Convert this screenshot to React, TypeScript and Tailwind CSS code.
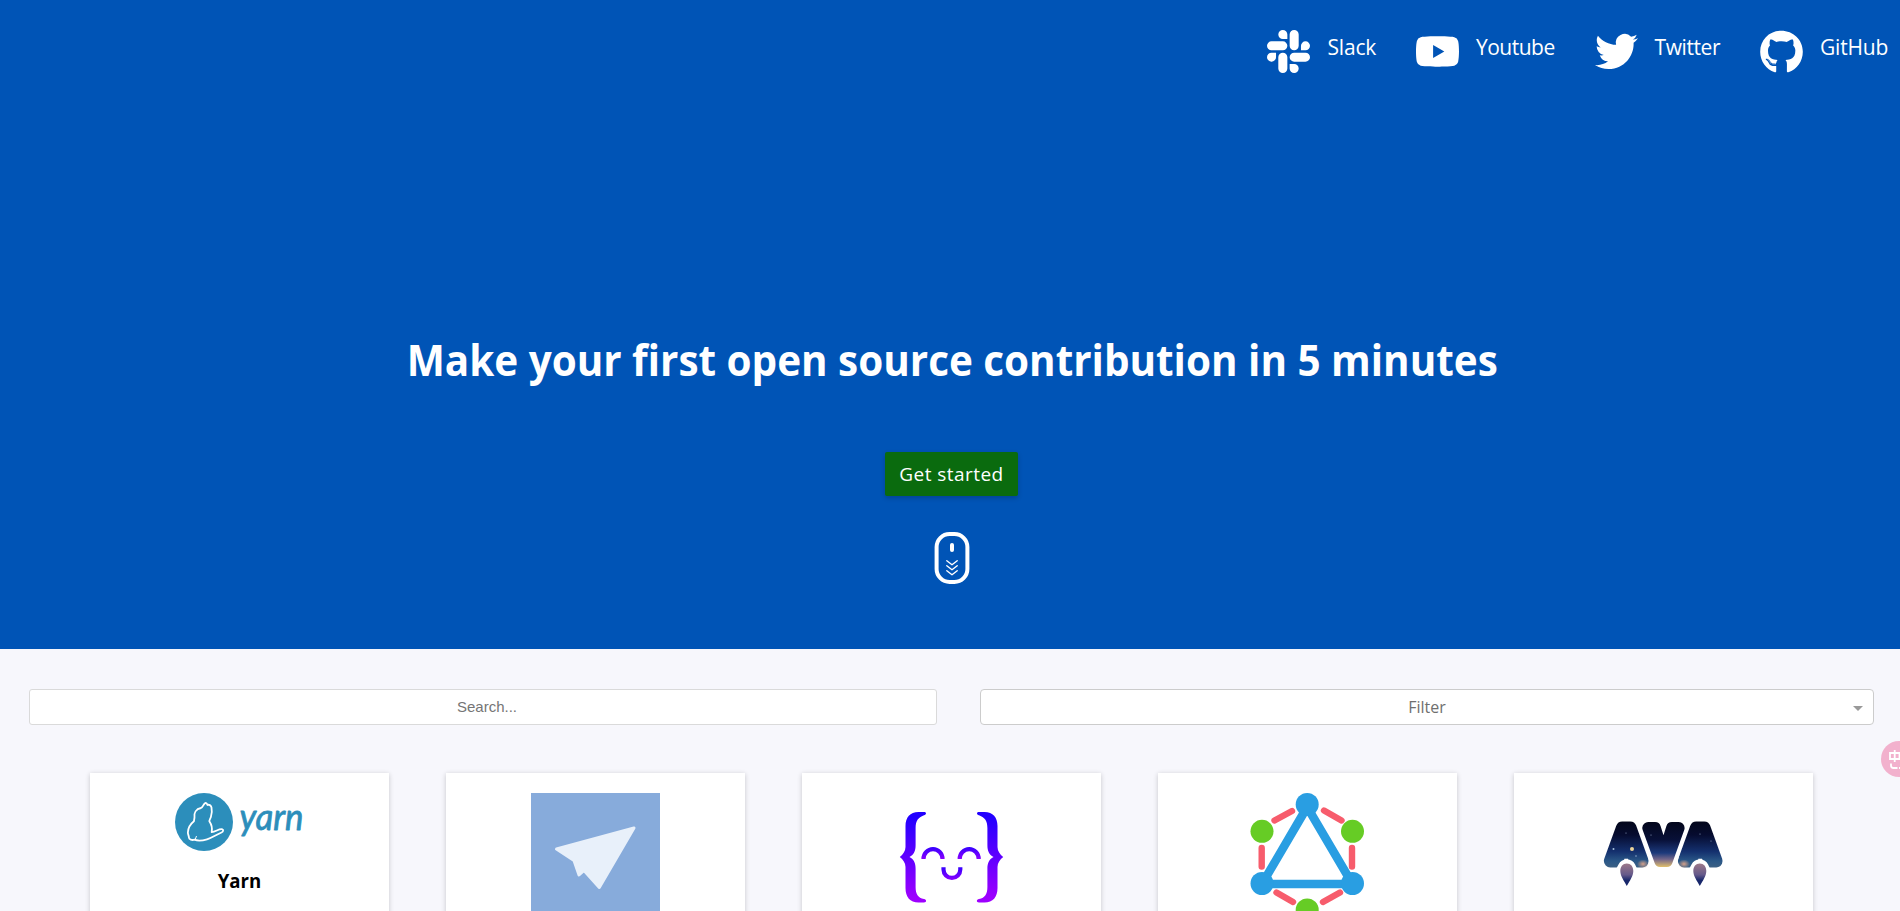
import React from "react";
import { FaGithub } from "react-icons/fa";

const SlackIcon = () => (
  <svg viewBox="0 0 24 24" className="h-[43px] w-[43px] fill-white">
    <path d="M5.042 15.165a2.528 2.528 0 0 1-2.52 2.523A2.528 2.528 0 0 1 0 15.165a2.527 2.527 0 0 1 2.522-2.52h2.52v2.52zM6.313 15.165a2.527 2.527 0 0 1 2.521-2.52 2.527 2.527 0 0 1 2.521 2.52v6.313A2.528 2.528 0 0 1 8.834 24a2.528 2.528 0 0 1-2.521-2.522v-6.313zM8.834 5.042a2.528 2.528 0 0 1-2.521-2.52A2.528 2.528 0 0 1 8.834 0a2.528 2.528 0 0 1 2.521 2.522v2.52H8.834zM8.834 6.313a2.528 2.528 0 0 1 2.521 2.521 2.528 2.528 0 0 1-2.521 2.521H2.522A2.528 2.528 0 0 1 0 8.834a2.528 2.528 0 0 1 2.522-2.521h6.312zM18.956 8.834a2.528 2.528 0 0 1 2.522-2.521A2.528 2.528 0 0 1 24 8.834a2.528 2.528 0 0 1-2.522 2.521h-2.522V8.834zM17.688 8.834a2.528 2.528 0 0 1-2.523 2.521 2.527 2.527 0 0 1-2.52-2.521V2.522A2.527 2.527 0 0 1 15.165 0a2.528 2.528 0 0 1 2.523 2.522v6.312zM15.165 18.956a2.528 2.528 0 0 1 2.523 2.522A2.528 2.528 0 0 1 15.165 24a2.527 2.527 0 0 1-2.52-2.522v-2.522h2.52zM15.165 17.688a2.527 2.527 0 0 1-2.52-2.523 2.526 2.526 0 0 1 2.52-2.52h6.313A2.527 2.527 0 0 1 24 15.165a2.528 2.528 0 0 1-2.522 2.523h-6.313z" />
  </svg>
);

const YoutubeIcon = () => (
  <svg viewBox="0 0 24 24" className="h-[43px] w-[43px] fill-white">
    <path d="M23.498 6.186a3.016 3.016 0 0 0-2.122-2.136C19.505 3.545 12 3.545 12 3.545s-7.505 0-9.377.505A3.017 3.017 0 0 0 .502 6.186C0 8.07 0 12 0 12s0 3.93.502 5.814a3.016 3.016 0 0 0 2.122 2.136c1.871.505 9.376.505 9.376.505s7.505 0 9.377-.505a3.015 3.015 0 0 0 2.122-2.136C24 15.93 24 12 24 12s0-3.93-.502-5.814zM9.545 15.568V8.432L15.818 12l-6.273 3.568z" />
  </svg>
);

const TwitterIcon = () => (
  <svg viewBox="0 0 24 24" className="h-[43px] w-[43px] fill-white">
    <path d="M23.953 4.57a10 10 0 01-2.825.775 4.958 4.958 0 002.163-2.723c-.951.555-2.005.959-3.127 1.184a4.92 4.92 0 00-8.384 4.482C7.69 8.095 4.067 6.13 1.64 3.162a4.822 4.822 0 00-.666 2.475c0 1.71.87 3.213 2.188 4.096a4.904 4.904 0 01-2.228-.616v.06a4.923 4.923 0 003.946 4.827 4.996 4.996 0 01-2.212.085 4.936 4.936 0 004.604 3.417 9.867 9.867 0 01-6.102 2.105c-.39 0-.779-.023-1.17-.067a13.995 13.995 0 007.557 2.209c9.053 0 13.998-7.496 13.998-13.985 0-.21 0-.42-.015-.63A9.935 9.935 0 0024 4.59z" />
  </svg>
);

const MouseIcon = () => (
  <svg viewBox="0 0 36 52" className="h-[52px] w-9" fill="none" stroke="white" strokeLinecap="round" strokeLinejoin="round">
    <rect x="2.6" y="2" width="30.8" height="48" rx="13" strokeWidth="4" />
    <path d="M18 13v5" strokeWidth="4" />
    <path d="M12.8 28.7l5.2 4 5.2-4M12.8 33.7l5.2 4 5.2-4M12.8 38.7l5.2 4 5.2-4" strokeWidth="1.4" />
  </svg>
);

const YarnLogo = () => (
  <svg viewBox="0 0 129 58" className="h-[58px] w-[129px] overflow-visible">
    <circle cx="29" cy="29" r="29" fill="#2c8ebb" />
    <path
      d="M19.5 24.5c-.8-4.500 1.500-8.500 6.500-9.500 1.800-.5 2.200-3.500 4-4.800.8-.6 2 .2 2.500 1.800 1.500-.8 3.500.3 4 2.500.7 3.500.4 6.500-.6 9.500-.7 2-2 3.500-1.400 4.600 2 3 3 6.500 2.200 10.500 4-.2 6.800-3.400 10.200-3 2 .4 1.400 2.700-.4 3.400-5 2-9.300 5.300-14.500 6.800-3.500 1-9.500 1.600-12.500.4-2.500.8-5.500-.2-5.600-2.200.1-1.800-1.200-3.200-1-5.200.3-5.800 3-8.600 6-11z"
      fill="none" stroke="white" strokeWidth="1.800" strokeLinejoin="round"
    />
    <path d="M20 47l1.500-4" stroke="white" strokeWidth="1" />
    <text x="64.500" y="36.500" textLength="64" lengthAdjust="spacingAndGlyphs" fill="#2c8ebb" stroke="#2c8ebb" strokeWidth="0.800" strokeLinejoin="round" fontSize="36" fontStyle="italic" fontFamily="Lato, sans-serif">yarn</text>
  </svg>
);

const PlaneLogo = () => (
  <svg viewBox="0 0 129 129" className="h-[129px] w-[129px]">
    <rect width="129" height="129" fill="#87abdb" />
    <path d="M25.500 56L103 35L68.300 94.500L53 77.500L48 82L43 67.500Z" fill="#e8f0fa" stroke="#e8f0fa" strokeWidth="3" strokeLinejoin="round" />
  </svg>
);

const SmileLogo = () => (
  <svg viewBox="0 0 129 129" className="h-[129px] w-[129px]">
    <defs>
      <linearGradient id="brace" gradientUnits="userSpaceOnUse" x1="0" y1="19" x2="0" y2="109">
        <stop offset="0.05" stopColor="#2200ff" />
        <stop offset="0.95" stopColor="#9d00ff" />
      </linearGradient>
      <linearGradient id="eyes" gradientUnits="userSpaceOnUse" x1="0" y1="54" x2="0" y2="66">
        <stop offset="0" stopColor="#3300ff" />
        <stop offset="1" stopColor="#8a00ff" />
      </linearGradient>
      <linearGradient id="mouth" gradientUnits="userSpaceOnUse" x1="0" y1="74" x2="0" y2="87">
        <stop offset="0" stopColor="#3300ff" />
        <stop offset="1" stopColor="#8a00ff" />
      </linearGradient>
    </defs>
    <g fill="url(#brace)">
      <path d="M37 19H31.500C23 19 18.500 24.500 18.500 33V54C18.500 58 16 61.500 12.800 64C16 66.500 18.500 70 18.500 74V95C18.500 104 23 109.500 31.500 109.500H37C39.800 109.500 39.800 106.500 37 106C31 105 28.600 101 28.600 94V76C28.600 70 27 66.500 22.500 64C27 61.500 28.600 58 28.600 52V35C28.600 28 31 24.500 37 22.300C39.700 21.400 39.700 19 37 19Z" />
      <path transform="translate(129 0) scale(-1 1)" d="M37 19H31.500C23 19 18.500 24.500 18.500 33V54C18.500 58 16 61.500 12.800 64C16 66.500 18.500 70 18.500 74V95C18.500 104 23 109.500 31.500 109.500H37C39.800 109.500 39.800 106.500 37 106C31 105 28.600 101 28.600 94V76C28.600 70 27 66.500 22.500 64C27 61.500 28.600 58 28.600 52V35C28.600 28 31 24.500 37 22.300C39.700 21.400 39.700 19 37 19Z" />
    </g>
    <path d="M36.500 66A9.500 9.800 0 0 1 55.500 66M72.700 66A9.500 9.800 0 0 1 91.700 66" fill="none" stroke="url(#eyes)" strokeWidth="4.200" />
    <path d="M56.500 74.300V76.500A8.400 8.400 0 0 0 73.300 76.500V74.300" fill="none" stroke="url(#mouth)" strokeWidth="4.200" />
  </svg>
);

const GraphLogo = () => (
  <svg viewBox="0 0 129 129" className="h-[129px] w-[129px]">
    <g stroke="#f75c6c" strokeWidth="6.400" strokeLinecap="round">
      <path d="M31.500 27.500L49 18M81 17.500L98.500 27.500M18.700 55V73.500M109 55V73.500M33.500 99.500L50 109M80 109L97 99.500" />
    </g>
    <path d="M64.200 14L19 91H109.500Z" fill="none" stroke="#299ee2" strokeWidth="8.600" />
    <g fill="#299ee2">
      <circle cx="64.200" cy="11.500" r="11.500" />
      <circle cx="19" cy="90.500" r="11.500" />
      <circle cx="109.500" cy="90.500" r="11.500" />
    </g>
    <g fill="#66cc25">
      <circle cx="19" cy="38.300" r="11.500" />
      <circle cx="109.500" cy="38.300" r="11.500" />
      <circle cx="64.200" cy="117" r="11.500" />
    </g>
  </svg>
);

const AvaLogo = () => (
  <svg viewBox="0 0 129 129" className="h-[129px] w-[129px]">
    <defs>
      <linearGradient id="night" gradientUnits="userSpaceOnUse" x1="0" y1="28" x2="0" y2="75">
        <stop offset="0" stopColor="#03061a" />
        <stop offset="0.3" stopColor="#060c30" />
        <stop offset="0.65" stopColor="#14306e" />
        <stop offset="0.85" stopColor="#2a5787" />
        <stop offset="1" stopColor="#3d6184" />
      </linearGradient>
      <linearGradient id="dawn" gradientUnits="userSpaceOnUse" x1="0" y1="28" x2="0" y2="75">
        <stop offset="0" stopColor="#03061a" />
        <stop offset="0.4" stopColor="#081038" />
        <stop offset="0.68" stopColor="#1c3a7c" />
        <stop offset="0.82" stopColor="#77688a" />
        <stop offset="1" stopColor="#f0cc68" />
      </linearGradient>
      <linearGradient id="flame" x1="0" y1="0" x2="0" y2="1">
        <stop offset="0" stopColor="#9c7888" />
        <stop offset="0.5" stopColor="#65598a" />
        <stop offset="0.75" stopColor="#18276b" />
      </linearGradient>
      <radialGradient id="glow">
        <stop offset="0" stopColor="#d3a08a" />
        <stop offset="1" stopColor="#d3a08a" stopOpacity="0" />
      </radialGradient>
    </defs>
    <g fontFamily="'Liberation Sans', Arial, sans-serif" fontWeight="700" fontSize="49" strokeWidth="13" strokeLinejoin="round">
      <text x="10" y="68.200" textLength="34.500" lengthAdjust="spacingAndGlyphs" fill="url(#night)" stroke="url(#night)">A</text>
      <text x="84" y="68.200" textLength="34.500" lengthAdjust="spacingAndGlyphs" fill="url(#night)" stroke="url(#night)">A</text>
      <ellipse cx="44" cy="71" rx="6" ry="4.500" fill="url(#glow)" stroke="none" />
      <ellipse cx="85" cy="71" rx="6" ry="4.500" fill="url(#glow)" stroke="none" />
      <path d="M37.500 22L53.500 80H75.500L91 22Z" fill="white" stroke="none" />
      <text x="48.800" y="68.200" textLength="31.400" lengthAdjust="spacingAndGlyphs" fill="url(#dawn)" stroke="url(#dawn)" strokeWidth="12">V</text>
    </g>
    <path d="M16 80Q17 75 19.500 71.500Q22 66.500 27.800 66.500T36.100 71.500Q38 75 39.500 80zM89 80Q90 75 92.500 71.500Q95 66.500 100.800 66.500T109.100 71.500Q111 75 112.500 80z" fill="white" />
    <path d="M27.800 70.500c4 0 6.500 3 6.500 7.500 0 5-3.500 9.500-6.500 15-3-5.500-6.500-10-6.500-15 0-4.500 2.500-7.500 6.500-7.500z" fill="url(#flame)" />
    <path d="M100.800 70.500c4 0 6.500 3 6.500 7.500 0 5-3.500 9.500-6.500 15-3-5.500-6.500-10-6.500-15 0-4.500 2.500-7.500 6.500-7.500z" fill="url(#flame)" />
    <circle cx="33" cy="56" r="2" fill="#ecd49a" />
    <g fill="#a9c0dc">
      <circle cx="14.500" cy="56" r="1" />
      <circle cx="37" cy="63" r=".7" />
      <circle cx="27" cy="40" r=".5" />
      <circle cx="52" cy="42" r=".5" />
      <circle cx="101" cy="41" r=".5" />
      <circle cx="112" cy="48" r=".5" />
    </g>
  </svg>
);

const links = [
  { label: "Slack", icon: <SlackIcon />, item: "w-[149.5px]", text: "pl-px tracking-[-0.2px]" },
  { label: "Youtube", icon: <YoutubeIcon />, item: "w-[178.5px]", text: "tracking-[-0.5px]" },
  { label: "Twitter", icon: <TwitterIcon />, item: "w-[165.5px]", text: "tracking-[-0.4px]" },
  { label: "GitHub", icon: <FaGithub className="h-[44px] w-[43px] text-white" />, item: "w-[140px]", text: "tracking-[-0.2px]" },
];

const projects = [
  { id: "yarn", name: "Yarn", logo: <YarnLogo /> },
  { id: "plane", logo: <PlaneLogo /> },
  { id: "smile", logo: <SmileLogo /> },
  { id: "graph", logo: <GraphLogo /> },
  { id: "ava", logo: <AvaLogo /> },
];

export default function App() {
  return (
    <div className="relative h-[911px] w-full overflow-hidden bg-[#f7f7fc] font-['Open_Sans','Noto_Sans',sans-serif]">
      <section className="flex h-[649px] flex-col bg-[#0054b6] text-white">
        <nav className="flex justify-end pt-[30px]">
          {links.map((l) => (
            <a key={l.label} className={`flex shrink-0 ${l.item}`}>
              <span className="w-[60px]">{l.icon}</span>
              <span className={`text-[21px] leading-[34px] whitespace-nowrap ${l.text}`}>{l.label}</span>
            </a>
          ))}
        </nav>
        <div className="mt-64 flex flex-col items-center">
          <h1 className="scale-x-[0.94] pl-1 text-[43px] leading-[60px] font-bold whitespace-nowrap">
            Make your first open source contribution in 5 minutes
          </h1>
          <a className="mt-[62px] mr-[-3px] flex h-11 w-[133px] items-center justify-center rounded-xs bg-[#0a6b0e] text-[19px] tracking-[0.45px] shadow-[0_2px_5px_rgba(0,0,0,0.2)]">
            Get started
          </a>
          <div className="mt-9 pl-1">
            <MouseIcon />
          </div>
        </div>
      </section>

      <section className="flex gap-[43px] pt-10 pl-[29px]">
        <div className="flex h-9 w-[908px] items-center justify-center rounded-[3px] border border-[#dadada] bg-white pl-[8px] font-['Liberation_Sans',Arial,sans-serif] text-[15px] text-[#757575]">
          Search...
        </div>
        <div className="relative flex h-9 w-[894px] items-center justify-center rounded-[4px] border border-[#ccc] bg-white text-base text-[#6f6f6f]">
          Filter
          <span className="absolute top-4 right-[10px] border-x-5 border-t-5 border-x-transparent border-t-[#999]" />
        </div>
      </section>

      <section className="flex gap-[57px] pt-12 pl-[90px]">
        {projects.map((p) => (
          <article key={p.id} className="flex h-[300px] w-[299px] shrink-0 flex-col items-center bg-white pt-5 shadow-[0_1px_5px_rgba(0,0,0,0.2)]">
            {p.logo}
            {p.name && <h2 className="mt-4 scale-x-[0.93] text-[20px] leading-[28px] font-bold text-black">{p.name}</h2>}
          </article>
        ))}
      </section>

      <div className="absolute top-[741px] left-[1881px] h-9 w-9 rounded-full bg-[#f2b1cd]">
        <svg viewBox="0 0 36 36" className="h-9 w-9" fill="none" stroke="white" strokeWidth="1.800">
          <path d="M9 12h9.500v6H9zM13.700 9v12" />
          <path d="M10 22.500v2q0 2.500 2.500 2.500h4M18 27h4" />
        </svg>
      </div>
    </div>
  );
}
